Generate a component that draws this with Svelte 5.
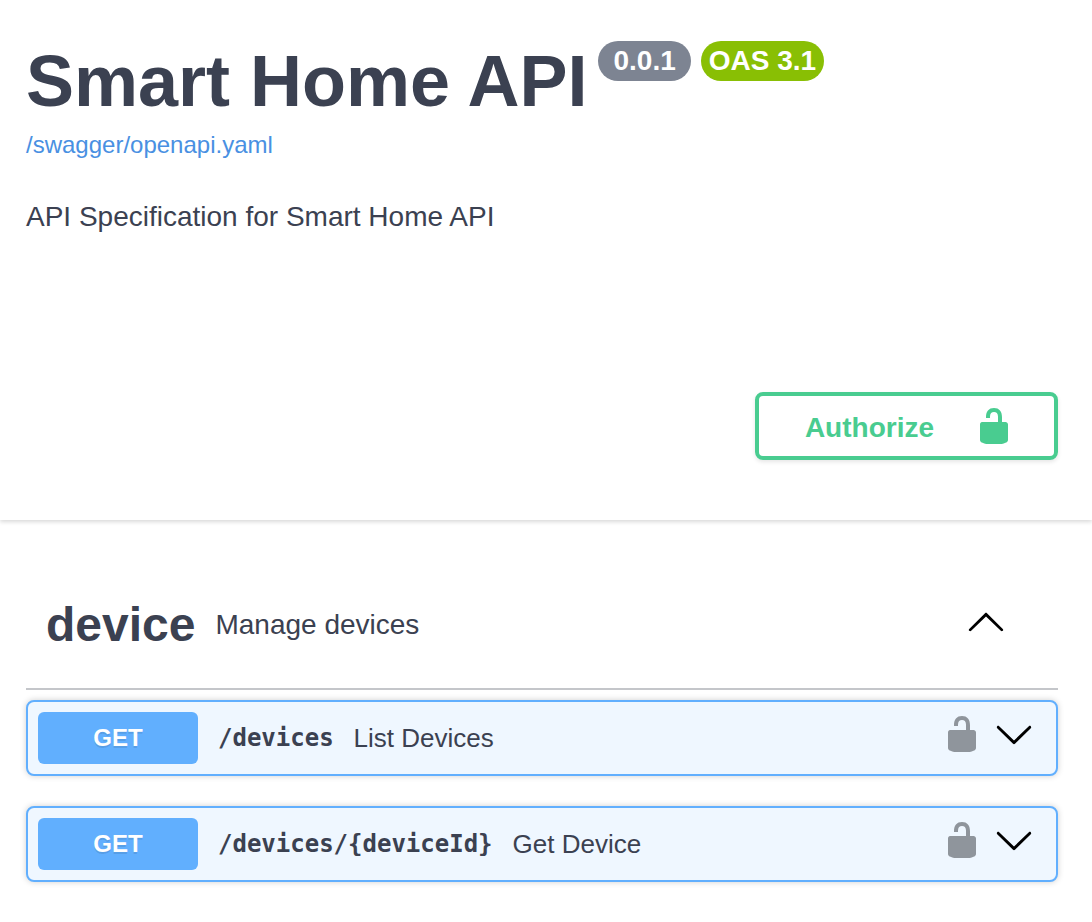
<script>
  const operations = [
    { method: 'GET', path: '/devices', summary: 'List Devices' },
    { method: 'GET', path: '/devices/{deviceId}', summary: 'Get Device' },
  ];
</script>

{#snippet unlocked()}
  <svg class="icon" viewBox="0 0 20 20" aria-hidden="true">
    <path d="M15.8 8H14V5.6C14 2.703 12.665 1 10 1 7.334 1 6 2.703 6 5.6V6h2v-.801C8 3.754 8.797 3 10 3c1.203 0 2 .754 2 2.199V8H4c-.553 0-1 .646-1 1.199V17c0 .549.428 1.139.951 1.307l1.197.387C5.672 18.861 6.55 19 7.1 19h5.8c.549 0 1.428-.139 1.951-.307l1.196-.387c.524-.167.953-.757.953-1.306V9.199C17 8.646 16.352 8 15.8 8z" />
  </svg>
{/snippet}

<header class="info">
  <div class="heading">
    <h1>Smart Home API</h1>
    <div class="badges">
      <span class="badge version">0.0.1</span>
      <span class="badge oas">OAS 3.1</span>
    </div>
  </div>
  <a class="spec-link" href="/swagger/openapi.yaml">/swagger/openapi.yaml</a>
  <p>API Specification for Smart Home API</p>
</header>

<section class="scheme">
  <button class="authorize" type="button">
    <span>Authorize</span>
    {@render unlocked()}
  </button>
</section>

<main>
  <div class="tag">
    <h2>device</h2>
    <p>Manage devices</p>
    <button class="plain collapse" type="button" aria-label="Collapse operation">
      <svg class="icon" viewBox="0 0 20 20" aria-hidden="true">
        <path d="M17.418 14.908c.272.268.709.268.979 0s.271-.701 0-.969l-7.908-7.83c-.27-.268-.707-.268-.979 0l-7.908 7.83c-.27.268-.27.701 0 .969.271.268.709.268.979 0L10 7.767l7.418 7.141z" />
      </svg>
    </button>
  </div>

  <div class="operations">
    {#each operations as op (op.path)}
      <div class="operation">
        <button class="summary" type="button">
          <span class="method">{op.method}</span>
          <span class="path">{op.path}</span>
          <span class="description">{op.summary}</span>
        </button>
        <div class="controls">
          <button class="plain lock" type="button" aria-label="Authorization button unlocked">
            {@render unlocked()}
          </button>
          <button class="plain" type="button" aria-label="Expand operation">
            <svg class="icon" viewBox="0 0 20 20" aria-hidden="true">
              <path d="M17.418 6.109c.272-.268.709-.268.979 0s.271.701 0 .969l-7.908 7.83c-.27.268-.707.268-.979 0l-7.908-7.83c-.27-.268-.27-.701 0-.969.271-.268.709-.268.979 0L10 13.25l7.418-7.141z" />
            </svg>
          </button>
        </div>
      </div>
    {/each}
  </div>
</main>

<style>
  :global(body) {
    margin: 0;
    background: #fff;
    color: #3b4151;
    font-family: "Liberation Sans", Arial, Helvetica, sans-serif;
  }

  h1,
  h2,
  p {
    margin: 0;
  }

  button {
    font-family: inherit;
    color: inherit;
    cursor: pointer;
  }

  .icon {
    display: block;
    flex: none;
    width: 40px;
    height: 40px;
    fill: currentColor;
  }

  .info {
    padding: 41px 34px 0 26px;
  }

  .heading {
    display: flex;
    align-items: flex-start;
    gap: 11px;
  }

  h1 {
    font-size: 72px;
    line-height: 80px;
  }

  .badges {
    display: flex;
    gap: 10px;
  }

  .badge {
    border-radius: 20px;
    color: #fff;
    font-size: 28px;
    font-weight: 700;
    line-height: 40px;
    white-space: nowrap;
  }

  .version {
    padding: 0 15px;
    background: #7d8492;
  }

  .oas {
    padding: 0 8px;
    background: #89bf04;
  }

  .spec-link {
    display: block;
    width: fit-content;
    margin-top: 10px;
    color: #4990e2;
    font-size: 24px;
    line-height: 28px;
    text-decoration: none;
  }

  .info p {
    margin-top: 42px;
    font-size: 28px;
    line-height: 32px;
  }

  .scheme {
    display: flex;
    justify-content: flex-end;
    margin-top: 99px;
    padding: 60px 34px;
    box-shadow: 0 2px 4px rgba(0, 0, 0, 0.15);
    clip-path: inset(0 0 -8px);
  }

  .authorize {
    display: flex;
    align-items: center;
    gap: 40px;
    padding: 10px 40px 10px 46px;
    border: 4px solid #49cc90;
    border-radius: 8px;
    background: transparent;
    box-shadow: 0 2px 4px rgba(0, 0, 0, 0.1);
    color: #49cc90;
    font-size: 28px;
    font-weight: 700;
    line-height: 36px;
  }

  .authorize span {
    padding-top: 4px;
  }

  main {
    padding: 60px 34px 40px 26px;
  }

  .tag {
    display: flex;
    align-items: center;
    gap: 20px;
    padding: 17px 52px 35px 20px;
    border-bottom: 2px solid #c4c6ca;
  }

  h2 {
    font-size: 48px;
    line-height: 56px;
  }

  .tag p {
    flex: 1;
    font-size: 28px;
    line-height: 32px;
  }

  .plain {
    padding: 0;
    border: 0;
    background: none;
    color: #000;
  }

  .collapse {
    padding-bottom: 8px;
  }

  .lock {
    color: #8f959c;
  }

  .operations {
    display: grid;
    gap: 30px;
    margin-top: 10px;
  }

  .operation {
    display: flex;
    align-items: center;
    padding: 10px 22px 10px 10px;
    border: 2px solid #61affe;
    border-radius: 8px;
    background: #eff7ff;
    box-shadow: 0 0 6px rgba(0, 0, 0, 0.19);
  }

  .summary {
    display: flex;
    flex: 1;
    align-items: center;
    gap: 20px;
    min-width: 0;
    padding: 0;
    border: 0;
    background: none;
    text-align: left;
  }

  .method {
    width: 160px;
    border-radius: 6px;
    background: #61affe;
    color: #fff;
    font-size: 24px;
    font-weight: 700;
    line-height: 52px;
    text-align: center;
    text-shadow: 0 2px 0 rgba(0, 0, 0, 0.1);
  }

  .path {
    font-family: "DejaVu Sans Mono", Menlo, monospace;
    font-size: 24px;
    font-weight: 700;
  }

  .description {
    font-size: 26px;
  }

  .controls {
    display: flex;
    gap: 12px;
    padding-bottom: 8px;
  }
</style>
